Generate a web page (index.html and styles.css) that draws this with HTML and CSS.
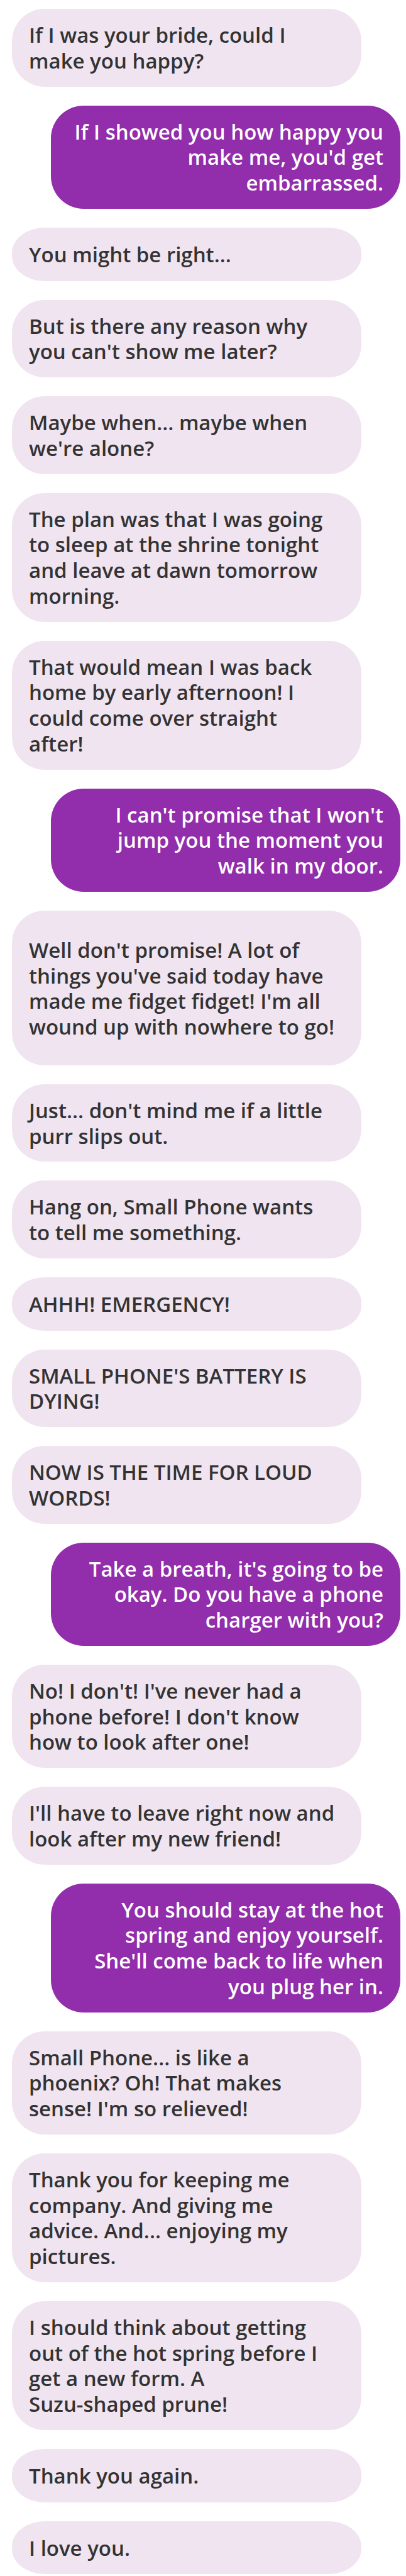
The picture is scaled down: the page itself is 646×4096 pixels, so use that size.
FILE: index.html
```html
<!DOCTYPE html>
<html lang="en">
<head>
<meta charset="utf-8">
<meta name="viewport" content="width=device-width, initial-scale=1">
<title>Messages</title>
<link rel="stylesheet" href="styles.css">
</head>
<body>
<main class="chat">
<p class="bubble received">If I was your bride, could I<br>make you happy?</p>
<p class="bubble sent">If I showed you how happy you<br>make me, you'd get<br>embarrassed.</p>
<p class="bubble received short">You might be right...</p>
<p class="bubble received">But is there any reason why<br>you can't show me later?</p>
<p class="bubble received">Maybe when... maybe when<br>we're alone?</p>
<p class="bubble received">The plan was that I was going<br>to sleep at the shrine tonight<br>and leave at dawn tomorrow<br>morning.</p>
<p class="bubble received">That would mean I was back<br>home by early afternoon! I<br>could come over straight<br>after!</p>
<p class="bubble sent">I can't promise that I won't<br>jump you the moment you<br>walk in my door.</p>
<p class="bubble received roomy">Well don't promise! A lot of<br>things you've said today have<br>made me fidget fidget! I'm all<br>wound up with nowhere to go!</p>
<p class="bubble received">Just... don't mind me if a little<br>purr slips out.</p>
<p class="bubble received">Hang on, Small Phone wants<br>to tell me something.</p>
<p class="bubble received short">AHHH! EMERGENCY!</p>
<p class="bubble received">SMALL PHONE'S BATTERY IS<br>DYING!</p>
<p class="bubble received">NOW IS THE TIME FOR LOUD<br>WORDS!</p>
<p class="bubble sent">Take a breath, it's going to be<br>okay. Do you have a phone<br>charger with you?</p>
<p class="bubble received">No! I don't! I've never had a<br>phone before! I don't know<br>how to look after one!</p>
<p class="bubble received">I'll have to leave right now and<br>look after my new friend!</p>
<p class="bubble sent">You should stay at the hot<br>spring and enjoy yourself.<br>She'll come back to life when<br>you plug her in.</p>
<p class="bubble received">Small Phone... is like a<br>phoenix? Oh! That makes<br>sense! I'm so relieved!</p>
<p class="bubble received">Thank you for keeping me<br>company. And giving me<br>advice. And... enjoying my<br>pictures.</p>
<p class="bubble received">I should think about getting<br>out of the hot spring before I<br>get a new form. A<br>Suzu-shaped prune!</p>
<p class="bubble received short">Thank you again.</p>
<p class="bubble received short">I love you.</p>
</main>
</body>
</html>
```
FILE: styles.css
```css
* {
  box-sizing: border-box;
}

body {
  margin: 0;
  background: #fff;
  font-family: "Open Sans", "Noto Sans", sans-serif;
  font-size: 33px;
  font-weight: 600;
  line-height: 1.235;
}

.chat {
  display: flex;
  flex-direction: column;
  gap: 30px;
  padding: 14px 9px 3px 19px;
}

.bubble {
  width: 90%;
  margin: 0;
  padding: 22px 27px 20px;
  border-radius: 52px;
}

.received {
  align-self: flex-start;
  background: #f0e4f0;
  color: #333;
}

.sent {
  align-self: flex-end;
  background: #922dab;
  color: #fff;
  text-align: right;
}

.short {
  padding-block: 23px 21px;
  border-radius: 52px / 40px;
}

.roomy {
  padding-block: 43px 40px;
}
```
